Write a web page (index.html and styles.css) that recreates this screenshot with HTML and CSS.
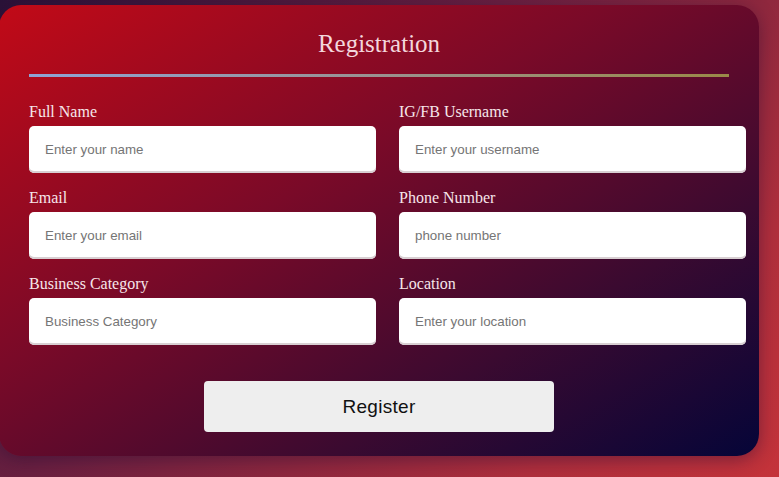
FILE: index.html
```html
<!DOCTYPE html>
<html lang="en">
<head>
<meta charset="utf-8">
<title>Registration</title>
<link rel="stylesheet" href="styles.css">
</head>
<body>
<div class="card">
  <h1 class="title">Registration</h1>
  <div class="rule"></div>
  <form class="form">
    <div class="grid">
      <div class="field">
        <label class="label">Full Name</label>
        <input class="input" type="text" placeholder="Enter your name">
      </div>
      <div class="field">
        <label class="label">IG/FB Username</label>
        <input class="input" type="text" placeholder="Enter your username">
      </div>
      <div class="field">
        <label class="label">Email</label>
        <input class="input" type="text" placeholder="Enter your email">
      </div>
      <div class="field">
        <label class="label">Phone Number</label>
        <input class="input" type="text" placeholder="phone number">
      </div>
      <div class="field">
        <label class="label">Business Category</label>
        <input class="input" type="text" placeholder="Business Category">
      </div>
      <div class="field">
        <label class="label">Location</label>
        <input class="input" type="text" placeholder="Enter your location">
      </div>
    </div>
    <div class="actions">
      <button class="btn" type="button">Register</button>
    </div>
  </form>
</div>
</body>
</html>
```

FILE: styles.css
```css
html, body {
  margin: 0;
  padding: 0;
  height: 100%;
}
body {
  background: linear-gradient(135deg, #2a1238 0%, #6a2040 40%, #b02f3c 80%, #c4333a 100%);
  font-family: "Liberation Serif", "Times New Roman", serif;
  overflow: hidden;
}
.card {
  box-sizing: border-box;
  width: 760px;
  height: 451px;
  margin: 5px 0 0 -1px;
  padding: 25px 13px 24px 30px;
  border-radius: 22px;
  background: linear-gradient(to bottom right, #c20a17 0%, #7a0a28 40%, #3a0a30 72%, #050538 100%);
  box-shadow: 0 4px 18px rgba(40, 10, 50, 0.45);
}
.title {
  margin: 0;
  font-weight: normal;
  font-size: 25px;
  line-height: 28px;
  color: #f3d6dc;
  text-align: center;
  padding-right: 17px;
}
.rule {
  height: 3px;
  width: 700px;
  margin-top: 16px;
  background: linear-gradient(to right, #8ea4d6, #9a9290 50%, #9a8a48);
}
.form {
  margin-top: 25px;
}
.grid {
  display: grid;
  grid-template-columns: 347px 347px;
  column-gap: 23px;
  row-gap: 15px;
}
.field {
  display: flex;
  flex-direction: column;
}
.label {
  font-size: 16px;
  line-height: 19px;
  color: #f6e6ea;
  margin-bottom: 5px;
}
.input {
  box-sizing: border-box;
  height: 47px;
  width: 100%;
  border: none;
  border-radius: 5px;
  background: #fff;
  padding: 0 16px;
  font-family: "Liberation Sans", Arial, sans-serif;
  font-size: 13.33px;
  color: #333;
  box-shadow: inset 0 -2px 0 #d8cfd2;
  outline: none;
}
.input::placeholder {
  color: #757575;
}
.actions {
  display: flex;
  justify-content: center;
  margin-top: 36px;
  padding-right: 17px;
}
.btn {
  width: 350px;
  height: 51px;
  border: none;
  border-radius: 4px;
  background: #eeeeee;
  font-family: "Liberation Sans", Arial, sans-serif;
  font-size: 19px;
  color: #111;
  letter-spacing: 0.3px;
}
```
